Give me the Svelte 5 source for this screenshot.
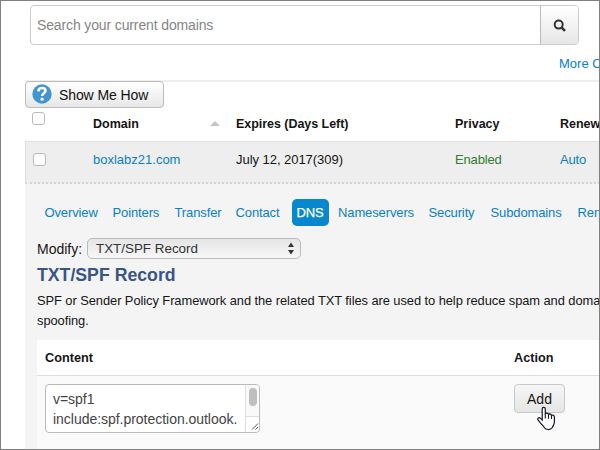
<script>
  const tabs = [
    { label: 'Overview', w: 68 },
    { label: 'Pointers', w: 62 },
    { label: 'Transfer', w: 61 },
    { label: 'Contact', w: 56 },
    { label: 'DNS', w: 46.5, active: true },
    { label: 'Nameservers', w: 90.5 },
    { label: 'Security', w: 62 },
    { label: 'Subdomains', w: 87 },
    { label: 'Renew', w: 60 }
  ];
</script>

<div class="page">
  <div class="search">
    <div class="field">Search your current domains</div>
    <div class="go">
      <svg width="14" height="14" viewBox="0 0 14 14"><circle cx="5.7" cy="5.6" r="4" /><path d="M8.7 8.6 L12 11.9" /></svg>
    </div>
  </div>
  <div class="more">More Options</div>

  <div class="list">
    <div class="help">
      <svg width="20" height="20" viewBox="0 0 20 20">
        <circle cx="10" cy="10" r="9.7" fill="#4296cf" />
        <path d="M6.4 7.4 C6.5 5 8 4 10.1 4 C12.2 4 13.5 5.2 13.5 6.8 C13.5 9.2 10.1 9.2 10.1 12.1" fill="none" stroke="#fff" stroke-width="2.5" />
        <circle cx="10.1" cy="15.2" r="1.6" fill="#fff" />
      </svg>
      <span>Show Me How</span>
    </div>
    <div class="row head">
      <div class="c1"><i class="check"></i></div>
      <div class="c2">Domain</div>
      <div class="c3"><i class="sort"></i></div>
      <div class="c4">Expires (Days Left)</div>
      <div class="c5">Privacy</div>
      <div class="c6">Renew</div>
    </div>
    <div class="row domain">
      <div class="c1"><i class="check"></i></div>
      <div class="c2 link">boxlabz21.com</div>
      <div class="c3"></div>
      <div class="c4">July 12, 2017(309)</div>
      <div class="c5 green">Enabled</div>
      <div class="c6 link">Auto</div>
    </div>
    <div class="panel">
      <div class="tabs">
        {#each tabs as tab}
          <div class="slot" style:width="{tab.w}px"><span class:active={tab.active}>{tab.label}</span></div>
        {/each}
      </div>
      <div class="modify">
        <span class="label">Modify:</span>
        <div class="select">
          <span>TXT/SPF Record</span>
          <svg width="8" height="13" viewBox="0 0 8 13"><path d="M1 5 L4 .5 L7 5Z M1 8 L4 12.5 L7 8Z" fill="#333" /></svg>
        </div>
      </div>
      <h2>TXT/SPF Record</h2>
      <p>SPF or Sender Policy Framework and the related TXT files are used to help reduce spam and domain<br />spoofing.</p>
      <div class="records">
        <div class="rhead"><span class="content">Content</span><span>Action</span></div>
        <div class="rbody">
          <div class="area">
            <div class="value">v=spf1<br />include:spf.protection.outlook.</div>
            <div class="bar">
              <div class="track"><i></i></div>
              <svg width="13" height="14" viewBox="0 0 13 14"><path d="M6 12.5 L12 6.5 M9.5 12.5 L12 10" stroke="#555" fill="none" /></svg>
            </div>
          </div>
          <div class="add">Add
            <svg class="hand" width="20" height="26" viewBox="0 0 20 26">
              <path d="M5.2 14 V3.2 C5.2 .8 8.3 .8 8.3 3.2 V8.3 C8.5 6.6 11.3 6.7 11.5 8.7 C12 7.3 14.3 7.6 14.5 9.6 C15.4 8.6 17.4 9.2 17.4 11.3 V16 C17.4 18.5 16 19.6 15.4 21.5 C13.5 24.3 8.8 24.1 7.3 21.5 C6.2 19.7 4.8 18.7 3.4 16.8 L1 14 C-.2 12.2 2.2 11 3.5 12.4 Z" fill="#fff" stroke="#15152b" stroke-width="1.2" />
              <path d="M8.3 8 V12.5 M11.5 8.7 V12.8 M14.5 9.6 V13" stroke="#15152b" stroke-width="1.1" />
            </svg>
          </div>
        </div>
      </div>
    </div>
  </div>
</div>

<style>
  .page { box-sizing: border-box; width: 600px; height: 450px; overflow: hidden; border: 1px solid #808080; background: #fff; font: 13px/20px "Liberation Sans", Arial, sans-serif; color: #151515; padding: 4px 0 0 24px; white-space: nowrap; }
  .search { display: flex; box-sizing: border-box; width: 549px; height: 40px; margin-left: 5px; border: 1px solid #ccc; border-radius: 4px; overflow: hidden; }
  .field { flex: 1; padding-left: 6px; font-size: 14px; line-height: 39px; color: #858585; letter-spacing: -0.13px; }
  .go { width: 37px; display: flex; align-items: center; justify-content: center; border-left: 1px solid #bbb; background: linear-gradient(#fff, #e6e6e6); }
  .go svg { fill: none; stroke: #333; stroke-width: 2; margin-top: 2px; }
  .go path { stroke-width: 2.6; }
  .more { margin: 9px 0 0 534px; height: 26px; color: #0780c8; }
  .list { border-top: 2px solid #eee; width: 575px; }
  .help { display: flex; align-items: center; box-sizing: border-box; width: 139px; height: 27px; margin-top: -1px; border: 1px solid #bbb; border-radius: 4px; background: linear-gradient(#fff, #e7e7e7); padding-left: 7px; font-size: 14px; color: #111; letter-spacing: -0.1px; }
  .help svg { margin-top: -1px; margin-left: -1px; }
  .help span { margin-left: 7px; }
  .row { display: flex; box-sizing: border-box; }
  .head { height: 34px; font-weight: bold; line-height: 32px; border-bottom: 1px solid #e2e2e2; font-size: 12.5px; }
  .domain { height: 42px; line-height: 35px; background: #eee; border-left: 1px solid #ddd; border-bottom: 2px dotted #d4d4d4; }
  .c1 { width: 68px; flex: none; }
  .domain .c1 { width: 67px; }
  .check { display: block; box-sizing: border-box; width: 13px; height: 13px; margin: 4px 0 0 7px; border: 1px solid #b9b9b9; border-radius: 3px; background: #fff; }
  .domain .check { margin: 11px 0 0 7px; }
  .c2 { width: 117px; flex: none; }
  .c3 { width: 26px; flex: none; }
  .c4 { width: 219px; flex: none; letter-spacing: -0.04px; }
  .c5 { width: 105px; flex: none; }
  .sort { display: block; width: 0; margin-top: 13px; border: 5px solid transparent; border-bottom-color: #c4c4c4; border-top: 0; }
  .link, .tabs { color: #0780c8; }
  .domain .c5, .domain .c6 { letter-spacing: -0.15px; }
  .green { color: #327b32; }
  .panel { background: #f4f4f4; padding-left: 12px; height: 270px; }
  .tabs { display: flex; padding: 15px 0 0 7.5px; height: 39px; letter-spacing: -0.12px; }
  .slot { flex: none; }
  .slot span { line-height: 27px; }
  .slot .active { display: block; box-sizing: border-box; width: 37px; height: 27px; background: #0788ce; color: #fff; border-radius: 5px; text-align: center; -webkit-text-stroke: .25px #fff; }
  .modify { display: flex; height: 21px; align-items: center; font-size: 13.4px; }
  .label { width: 50px; font-size: 14px; }
  .select { box-sizing: border-box; width: 214px; height: 21px; border: 1px solid #bbb; border-radius: 5px; background: linear-gradient(#e5e5e5, #f7f7f7); padding: 0 5px 0 8px; display: flex; justify-content: space-between; align-items: center; color: #333; }
  h2 { margin: 4px 0 0; font-size: 17.7px; line-height: 24px; color: #385587; }
  p { margin: 4px 0 0; line-height: 20px; font-size: 12.9px; letter-spacing: -0.07px; }
  .records { margin-top: 9px; background: #fafafa; height: 120px; }
  .rhead { height: 35px; display: flex; padding-left: 8px; line-height: 36px; font-weight: bold; font-size: 12.7px; background: #fff; border-bottom: 1px solid #ddd; }
  .content { width: 469px; }
  .rbody { display: flex; align-items: flex-start; padding: 8px 0 0 8px; }
  .area { display: flex; box-sizing: border-box; width: 215px; height: 49px; margin-right: 254px; border: 1px solid #bbb; border-radius: 4px; background: #fff; overflow: hidden; }
  .value { flex: 1; padding: 4px 0 0 7px; font-size: 14px; line-height: 20px; color: #444; letter-spacing: -0.03px; }
  .bar { width: 13px; border-left: 1px solid #ddd; }
  .track { height: 32px; background: #f9f9f9; border-bottom: 1px solid #ddd; padding: 3px 0 0 3px; box-sizing: border-box; }
  .track i { display: block; width: 8px; height: 18px; border-radius: 4px; background: #bfbfbf; }
  .bar svg { display: block; }
  .add { position: relative; box-sizing: border-box; width: 51px; height: 29px; border: 1px solid #c8c8c8; border-radius: 4px; background: linear-gradient(#f6f6f6, #e5e5e5); text-align: center; font-size: 14px; line-height: 28px; }
  .hand { position: absolute; left: 22px; top: 21px; }
</style>
